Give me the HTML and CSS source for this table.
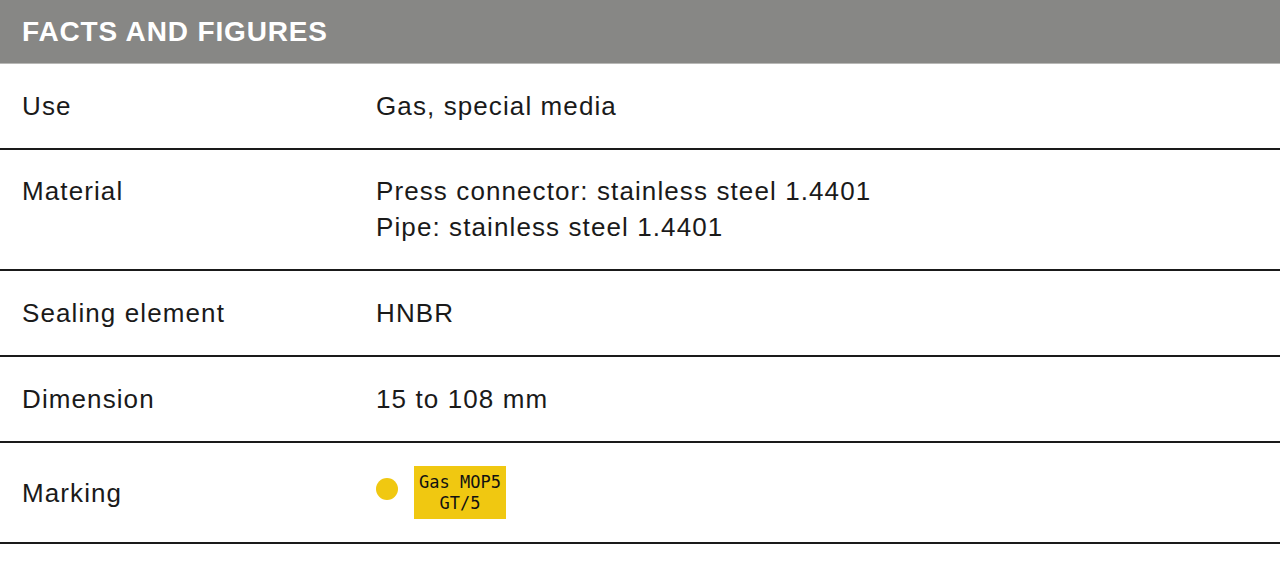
FILE: index.html
```html
<!DOCTYPE html>
<html>
<head>
<meta charset="utf-8">
<link rel="stylesheet" href="styles.css">
</head>
<body>
<div class="facts">
  <div class="facts-head">FACTS AND FIGURES</div>
  <div class="row row-std">
    <div class="label">Use</div>
    <div class="value">Gas, special media</div>
  </div>
  <div class="row row-tall">
    <div class="label">Material</div>
    <div class="value">Press connector: stainless steel 1.4401<br>Pipe: stainless steel 1.4401</div>
  </div>
  <div class="row row-std">
    <div class="label">Sealing element</div>
    <div class="value">HNBR</div>
  </div>
  <div class="row row-std">
    <div class="label">Dimension</div>
    <div class="value">15 to 108 mm</div>
  </div>
  <div class="row row-mark">
    <div class="label">Marking</div>
    <div class="value marking">
      <span class="dot"></span>
      <span class="tag">Gas MOP5<br>GT/5</span>
    </div>
  </div>
</div>
</body>
</html>
```

FILE: styles.css
```css
html, body {
  margin: 0;
  padding: 0;
  background: #fff;
}
body {
  font-family: "Liberation Sans", Arial, sans-serif;
  color: #1a1a1a;
}
.facts {
  width: 1280px;
}
.facts-head {
  background: #878785;
  color: #fff;
  font-weight: bold;
  font-size: 28px;
  letter-spacing: 0.85px;
  height: 64px;
  line-height: 64px;
  padding-left: 22px;
  box-sizing: border-box;
  border-bottom: 1px solid #b8b8b6;
}
.row {
  display: flex;
  align-items: center;
  border-bottom: 2px solid #1a1a1a;
  font-size: 26px;
  letter-spacing: 1.1px;
  line-height: 36px;
  box-sizing: border-box;
}
.row-std { height: 86px; }
.row-tall {
  height: 121px;
  align-items: flex-start;
  padding-top: 23px;
}
.row-mark { height: 101px; }
.label {
  width: 354px;
  padding-left: 22px;
}
.value {
  flex: 1;
}
.marking {
  display: flex;
  align-items: center;
  gap: 16px;
  letter-spacing: 0;
}
.dot {
  width: 22px;
  height: 22px;
  border-radius: 50%;
  background: #f0c811;
  margin-bottom: 8px;
}
.tag {
  background: #f0c811;
  font-family: "DejaVu Sans Mono", "Liberation Mono", monospace;
  font-size: 17px;
  line-height: 21px;
  text-align: center;
  width: 92px;
  height: 53px;
  display: flex;
  align-items: center;
  justify-content: center;
  color: #111;
}
```
